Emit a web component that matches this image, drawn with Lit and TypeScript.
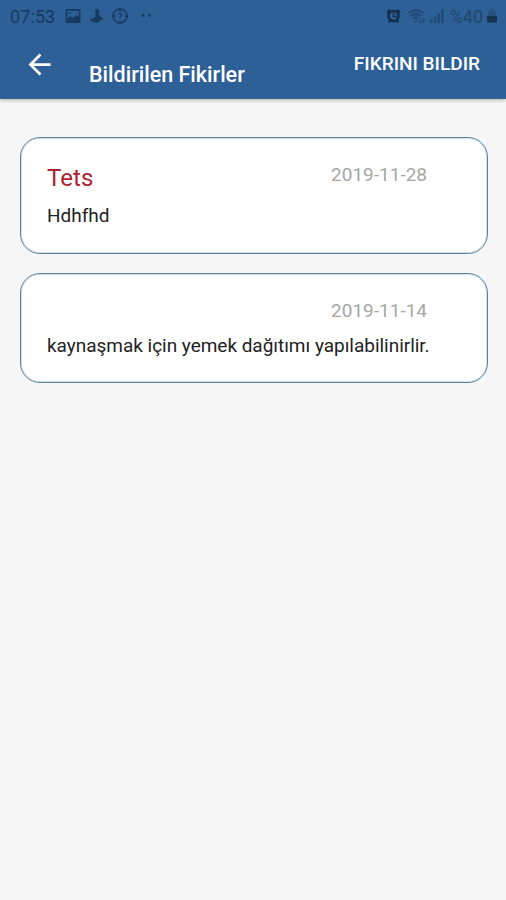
import { LitElement, html, css, nothing } from "lit";
import { customElement, property } from "lit/decorators.js";

interface Idea {
  title: string;
  date: string;
  text: string;
}

const ideas: Idea[] = [
  { title: "Tets", date: "2019-11-28", text: "Hdhfhd" },
  { title: "", date: "2019-11-14", text: "kaynaşmak için yemek dağıtımı yapılabilinirlir." },
];

@customElement("status-bar")
class StatusBar extends LitElement {
  static styles = css`
    :host {
      display: flex;
      justify-content: space-between;
      height: 32px;
      padding: 0 8px 0 10px;
      box-sizing: border-box;
      color: #173a60;
      font-size: 18px;
      line-height: 33px;
    }
    .group { display: flex; align-items: center; height: 32px; }
    .clock { letter-spacing: 0.1px; width: 55px; }
    .percent { margin: 0 3px 0 5px; color: #21456c; }
    svg { display: block; flex: none; }
    .picture { margin-top: -1px; }
    .figure { margin: -1px 0 0 8px; }
    .compass { margin: -1px 0 0 7px; }
    .dots { margin-left: 12px; }
    .alarm { margin-top: -1px; }
    .wifi { margin: -1px 0 0 6px; }
    .signal { margin-left: 4px; }
  `;
  render() {
    return html`
      <div class="group">
        <span class="clock">07:53</span>
        <svg class="picture" width="16" height="16" viewBox="0 0 16 16">
          <path fill="currentColor" fill-rule="evenodd" d="M2 1h12a1.5 1.5 0 0 1 1.5 1.5v11A1.5 1.5 0 0 1 14 15H2A1.5 1.5 0 0 1 .5 13.5v-11A1.5 1.5 0 0 1 2 1zM2.3 2.8v8.200l3.200-3 2 2 4-3 2.200 2V2.800z"/>
          <circle cx="5" cy="5.200" r="1" fill="currentColor"/>
        </svg>
        <svg class="figure" width="15" height="16" viewBox="0 0 15 16" fill="currentColor">
          <circle cx="8.200" cy="3.200" r="2.200"/>
          <path d="M6.500 5h3.500l.4 3 3.200 2-.2 1.800-2.600.4-1 2.400H5.300L4 13.600l-2.800-.8.2-2 3.200-.6 1.600-1.800z"/>
        </svg>
        <svg class="compass" width="18" height="18" viewBox="0 0 18 18" fill="none" stroke="currentColor" stroke-width="1.500">
          <circle cx="9" cy="9" r="7"/>
          <path d="M9 1v3.500M9 13.500V17M1 9h3.500M13.500 9H17M7.800 7.800a1.300 1.300 0 1 1 1.700 1.300L9 10v1"/>
        </svg>
        <svg class="dots" width="12" height="4" viewBox="0 0 12 4" fill="currentColor">
          <circle cx="2" cy="1.500" r="1.400"/><circle cx="8.500" cy="1.500" r="1.400"/>
        </svg>
      </div>
      <div class="group">
        <svg class="alarm" width="16" height="16" viewBox="0 0 16 16">
          <path d="M1 4.500 4 1.500M11 1.500l3 3M2.500 14.500l1.500-2M12.500 14.500l-1.500-2" stroke="#122e4c" stroke-width="2"/>
          <circle cx="7.500" cy="8" r="5" fill="none" stroke="#122e4c" stroke-width="2.600"/>
          <path d="M7.500 4.500V8.500h3" fill="none" stroke="#122e4c" stroke-width="1.400"/>
        </svg>
        <svg class="wifi" width="18" height="16" viewBox="0 0 18 16" fill="none" stroke="#1f476f" stroke-width="1.900">
          <path d="M.5 5.200q7.500-6 15 0M3 8q5-4 10 0M5.500 10.700q2.500-2 5 0"/>
          <path d="M8 12v2.500M12.500 10.500v4l-1.500-1.500M15.500 15v-4l1.300 1.400" stroke-width="1.300"/>
        </svg>
        <svg class="signal" width="15" height="16" viewBox="0 0 15 16" fill="#21496f">
          <path d="M0 11.500h2.500V15H0zM3.800 8.500h2.300V15H3.800zM7.500 5.500h2.300V15H7.500zM11.200 1.500h2.300V15h-2.300z"/>
        </svg>
        <span class="percent">%40</span>
        <svg width="12" height="16" viewBox="0 0 12 16">
          <path d="M4 1h4v2h2v5H2V3h2z" fill="#28537f"/>
          <path d="M1 8h10v5.500q0 1-1 1H2q-1 0-1-1z" fill="#15324f"/>
        </svg>
      </div>
    `;
  }
}

@customElement("idea-card")
class IdeaCard extends LitElement {
  @property({ attribute: false }) idea!: Idea;
  static styles = css`
    :host {
      display: block;
      box-sizing: border-box;
      border: 1px solid #5b829d;
      box-shadow: inset 0 0 0 1px #d5e0e6;
      border-radius: 20px;
      background: #fff;
      padding: 23px 60px 24px 26px;
    }
    .top { display: flex; justify-content: space-between; }
    .title { color: #ab2430; font-size: 24px; line-height: 34px; letter-spacing: 0.1px; }
    .date { margin-left: auto; color: #a6a6a6; font-size: 19px; line-height: 27px; }
    .text {
      color: #222;
      font-size: 19px;
      line-height: 26px;
      letter-spacing: -0.025px;
      margin-top: 8px;
      white-space: nowrap;
    }
    .date-only + .text { margin: 9px 0 -1px; }
  `;
  render() {
    const { title, date, text } = this.idea;
    return html`
      <div class="top ${title ? "" : "date-only"}">
        ${title ? html`<span class="title">${title}</span>` : nothing}
        <span class="date">${date}</span>
      </div>
      <div class="text">${text}</div>
    `;
  }
}

@customElement("app-root")
class AppRoot extends LitElement {
  static styles = css`
    :host {
      display: block;
      height: 900px;
      background: #f6f6f6;
      font-family: Roboto, sans-serif;
      overflow: hidden;
    }
    header {
      height: 99px;
      background: #2d6096;
      border-bottom: 1px solid #386590;
      box-shadow: 0 1px 4px rgba(0, 0, 0, 0.3);
      box-sizing: border-box;
    }
    .toolbar {
      display: flex;
      align-items: flex-start;
      color: #fff;
      padding: 0 26px 0 23px;
    }
    .back { display: block; margin-top: 16px; }
    h1 {
      margin: 29px 0 0 33px;
      font-size: 21.5px;
      line-height: 28px;
      font-weight: 500;
    }
    .action { margin: 20px 0 0 auto; font-size: 19px; line-height: 24px; font-weight: 500; }
    main {
      display: flex;
      flex-direction: column;
      gap: 19px;
      padding: 38px 18px 0 20px;
    }
  `;
  render() {
    return html`
      <header>
        <status-bar></status-bar>
        <div class="toolbar">
          <svg class="back" width="33" height="33" viewBox="0 0 24 24" fill="#fff">
            <path d="M20 11H7.830l5.590-5.590L12 4l-8 8 8 8 1.410-1.410L7.830 13H20v-2z"/>
          </svg>
          <h1>Bildirilen Fikirler</h1>
          <span class="action">FIKRINI BILDIR</span>
        </div>
      </header>
      <main>${ideas.map((idea) => html`<idea-card .idea=${idea}></idea-card>`)}</main>
    `;
  }
}
